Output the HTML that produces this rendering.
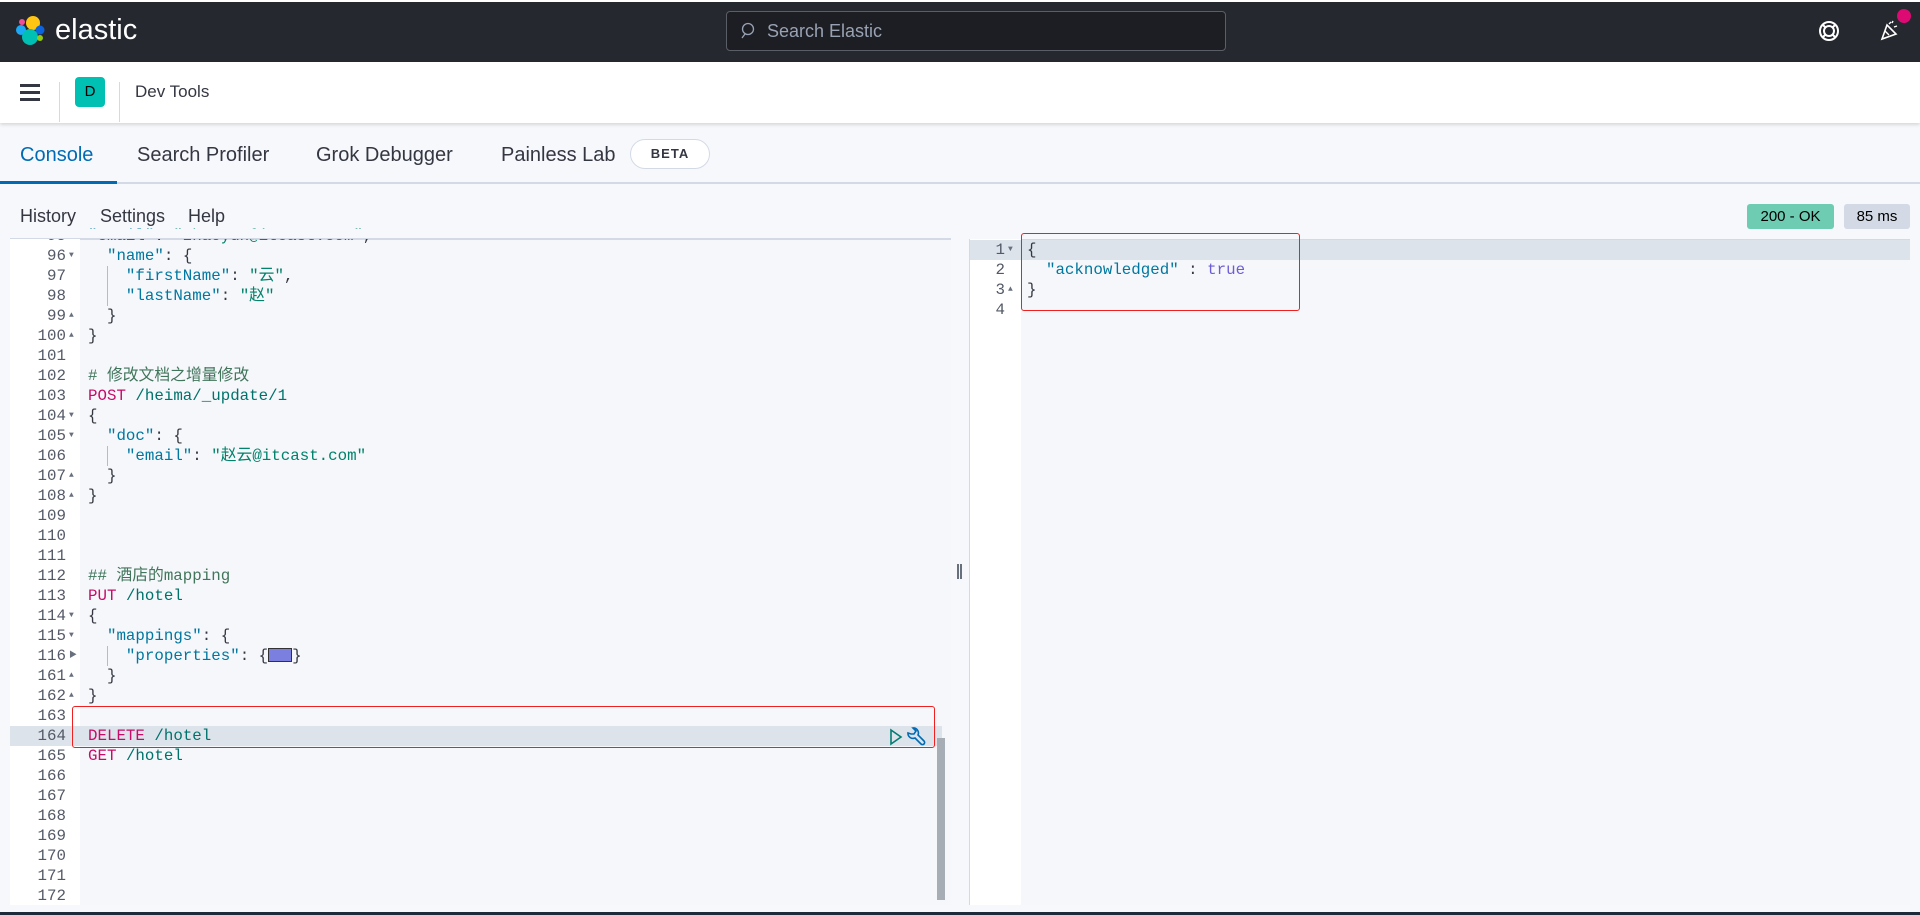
<!DOCTYPE html>
<html><head><meta charset="utf-8"><style>
*{margin:0;padding:0;box-sizing:border-box}
body{width:1920px;height:915px;overflow:hidden;background:#f7f8fc;font-family:"Liberation Sans","Noto Sans CJK SC",sans-serif;position:relative}
.abs{position:absolute}
.hdr{left:0;top:0;width:1920px;height:62px;background:#25282f;border-top:2px solid #fff}
.search{left:726px;top:11px;width:500px;height:40px;border:1px solid #5a5e66;border-radius:4px;background:#1d1e24;color:#98a2b3;font-size:18px;line-height:38px;padding-left:40px}
.bar2{left:0;top:62px;width:1920px;height:61px;background:#fff;box-shadow:0 2px 3px rgba(0,0,0,.12)}
.tab{top:144px;font-size:20px;color:#343741}
.mono{font-family:"Liberation Mono","Noto Sans CJK SC",monospace;font-size:15.8px}
.ln{position:absolute;height:20px;line-height:20px;white-space:pre}
.num{text-align:right;color:#535966}
.k{color:#0077a0}.s{color:#00826b}.m{color:#c80a68}.p{color:#00726b}.c{color:#41755c}.b{color:#343741}.t{color:#6b5dd6}
.fold{position:absolute;font-size:8px;color:#69707d;line-height:20px}
</style></head><body>
<div class="abs hdr"></div>
<svg class="abs" style="left:15px;top:15px" width="30" height="32" viewBox="0 0 30 32">
<circle cx="18" cy="8" r="7" fill="#fec514"/><circle cx="7" cy="7" r="3" fill="#f04e98"/><circle cx="6" cy="15" r="5" fill="#1ba9f5"/><circle cx="25" cy="15" r="4.5" fill="#0b64dd"/><circle cx="15" cy="22" r="8" fill="#00bfb3"/><circle cx="25" cy="23" r="3" fill="#93c90e"/></svg>
<div class="abs" style="left:55px;top:14px;font-size:29px;color:#fff">elastic</div>
<div class="abs search">Search Elastic</div>
<svg class="abs" style="left:739px;top:22px" width="18" height="18" viewBox="0 0 18 18"><circle cx="9" cy="7" r="5.5" fill="none" stroke="#98a2b3" stroke-width="1.3"/><path d="M6 12 L3 16" stroke="#98a2b3" stroke-width="1.3"/></svg>
<svg class="abs" style="left:1818px;top:20px" width="22" height="22" viewBox="0 0 22 22"><circle cx="11" cy="11" r="9" fill="none" stroke="#fff" stroke-width="2"/><circle cx="11" cy="11" r="5" fill="none" stroke="#fff" stroke-width="2"/><path d="M5 5l3 3M17 5l-3 3M5 17l3-3M17 17l-3-3" stroke="#fff" stroke-width="2"/></svg>
<svg class="abs" style="left:1878px;top:18px" width="24" height="24" viewBox="0 0 24 24"><path d="M4 21 L9 7 L18 16 Z" fill="none" stroke="#fff" stroke-width="1.6"/><path d="M7 13l4 4M11 6l2-2M16 9l3-1M14 5l1-2" stroke="#fff" stroke-width="1.4"/></svg>
<div class="abs" style="left:1897px;top:9px;width:14px;height:14px;border-radius:50%;background:#dd0a73"></div>
<div class="abs bar2"></div>
<div class="abs" style="left:20px;top:84px;width:20px;height:2.5px;background:#343741;box-shadow:0 7px 0 #343741,0 14px 0 #343741"></div>
<div class="abs" style="left:59px;top:82px;width:1px;height:40px;background:#d3dae6"></div>
<div class="abs" style="left:119px;top:82px;width:1px;height:40px;background:#d3dae6"></div>
<div class="abs" style="left:75px;top:77px;width:30px;height:30px;border-radius:4px;background:#00bfb3;color:#000;font-size:15px;text-align:center;line-height:30px">D</div>
<div class="abs" style="left:135px;top:82px;font-size:17px;color:#343741">Dev Tools</div>
<div class="abs tab" style="left:20px;color:#006bb4">Console</div>
<div class="abs tab" style="left:137px">Search Profiler</div>
<div class="abs tab" style="left:316px">Grok Debugger</div>
<div class="abs tab" style="left:501px">Painless Lab</div>
<div class="abs" style="left:630px;top:139px;width:80px;height:30px;border:1px solid #d3dae6;border-radius:15px;background:#fff;font-size:13px;font-weight:bold;letter-spacing:1px;text-align:center;line-height:28px;color:#343741">BETA</div>
<div class="abs" style="left:0;top:182px;width:1920px;height:2px;background:#d3dae6"></div>
<div class="abs" style="left:0;top:181px;width:117px;height:3px;background:#006bb4"></div>
<div class="abs" style="left:20px;top:206px;font-size:18px;color:#343741">History</div>
<div class="abs" style="left:100px;top:206px;font-size:18px;color:#343741">Settings</div>
<div class="abs" style="left:188px;top:206px;font-size:18px;color:#343741">Help</div>
<div class="abs" style="left:1747px;top:204px;width:87px;height:25px;background:#6dccb1;border-radius:3px;font-size:15px;text-align:center;line-height:25px;color:#000">200 - OK</div>
<div class="abs" style="left:1844px;top:204px;width:66px;height:25px;background:#d3dae6;border-radius:3px;font-size:15px;text-align:center;line-height:25px;color:#000">85 ms</div>
<!-- left editor -->
<div class="abs" style="left:10px;top:239px;width:941px;height:666px;background:#f5f7fa;border-top:1px solid #d3dae6"></div>
<div class="abs" style="left:10px;top:239px;width:70px;height:666px;background:#fff"></div>
<div class="abs" style="left:10px;top:726px;width:932px;height:20px;background:#dde3eb"></div>
<div class="abs" style="left:937px;top:738px;width:8px;height:162px;background:#a7adb5"></div>
<div class="abs mono" id="L" style="left:0;top:0"></div>
<div class="abs" style="left:969px;top:239px;width:1px;height:666px;background:#d3dae6"></div>
<div class="abs" style="left:957px;top:564px;width:2px;height:15px;background:#69707d;box-shadow:3px 0 0 #69707d"></div>
<!-- right editor -->
<div class="abs" style="left:970px;top:239px;width:940px;height:666px;background:#f5f7fa;border-top:1px solid #d3dae6"></div>
<div class="abs" style="left:970px;top:239px;width:51px;height:666px;background:#fff"></div>
<div class="abs" style="left:970px;top:240px;width:940px;height:20px;background:#dde3eb"></div>
<div class="abs mono">
<div class="ln num" style="left:970px;top:240px;width:35px">1</div><div class="fold" style="left:1008px;top:240px">▼</div>
<div class="ln num" style="left:970px;top:260px;width:35px">2</div>
<div class="ln num" style="left:970px;top:280px;width:35px">3</div><div class="fold" style="left:1008px;top:280px">▲</div>
<div class="ln num" style="left:970px;top:300px;width:35px">4</div>
<div class="ln b" style="left:1027px;top:240px">{</div>
<div class="ln" style="left:1027px;top:260px">  <span class="k">"acknowledged"</span><span class="b"> : </span><span class="t">true</span></div>
<div class="ln b" style="left:1027px;top:280px">}</div>
</div>
<div class="abs" style="left:1021px;top:233px;width:279px;height:78px;border:1.5px solid #f02020;border-radius:3px"></div>
<div class="abs" style="left:72px;top:706px;width:863px;height:42px;border:1.5px solid #f02020;border-radius:3px"></div>
<svg class="abs" style="left:888px;top:727px" width="40" height="20" viewBox="0 0 40 20"><path d="M3 3 L13 10 L3 17 Z" fill="none" stroke="#017d73" stroke-width="1.6"/><path d="M20 6a5 5 0 0 0 7 5l6 6a2 2 0 0 0 3-3l-6-6a5 5 0 0 0-5-7l3 3-2 3-3 0z" fill="none" stroke="#006bb4" stroke-width="1.6"/></svg>
<div class="abs" style="left:0;top:912px;width:1920px;height:3px;background:#1d2a3a"></div>
<script>
var rows=[
["95","",'<span class="k">"email"</span><span class="b">: </span><span class="s">"zhaoyun@itcast.com"</span><span class="b">,</span>'],
["96","▼",'  <span class="k">"name"</span><span class="b">: {</span>'],
["97","",'    <span class="k">"firstName"</span><span class="b">: </span><span class="s">"云"</span><span class="b">,</span>'],
["98","",'    <span class="k">"lastName"</span><span class="b">: </span><span class="s">"赵"</span>'],
["99","▲",'<span class="b">  }</span>'],
["100","▲",'<span class="b">}</span>'],
["101","",''],
["102","",'<span class="c"># 修改文档之增量修改</span>'],
["103","",'<span class="m">POST</span> <span class="p">/heima/_update/1</span>'],
["104","▼",'<span class="b">{</span>'],
["105","▼",'  <span class="k">"doc"</span><span class="b">: {</span>'],
["106","",'    <span class="k">"email"</span><span class="b">: </span><span class="s">"赵云@itcast.com"</span>'],
["107","▲",'<span class="b">  }</span>'],
["108","▲",'<span class="b">}</span>'],
["109","",''],["110","",''],["111","",''],
["112","",'<span class="c">## 酒店的mapping</span>'],
["113","",'<span class="m">PUT</span> <span class="p">/hotel</span>'],
["114","▼",'<span class="b">{</span>'],
["115","▼",'  <span class="k">"mappings"</span><span class="b">: {</span>'],
["116","▶",'    <span class="k">"properties"</span><span class="b">: {<span style="display:inline-block;width:24px;height:14px;background:#7b7fe0;border:1px solid #333;vertical-align:-2px"></span>}</span>'],
["161","▲",'<span class="b">  }</span>'],
["162","▲",'<span class="b">}</span>'],
["163","",''],
["164","",'<span class="m">DELETE</span> <span class="p">/hotel</span>'],
["165","",'<span class="m">GET</span> <span class="p">/hotel</span>'],
["166","",''],["167","",''],["168","",''],["169","",''],["170","",''],["171","",''],["172","",'']];
var h='';rows.forEach(function(r,i){var y=226+i*20;
h+='<div class="ln num" style="left:10px;top:'+y+'px;width:56px">'+r[0]+'</div>';
if(r[1])h+='<div class="fold" style="left:69px;top:'+y+'px">'+r[1]+'</div>';
h+='<div class="ln" style="left:88px;top:'+y+'px">'+r[2]+'</div>';
if([2,3,11,21].indexOf(i)>=0)h+='<div style="position:absolute;left:107px;top:'+y+'px;width:1px;height:20px;background:#bbb"></div>';});
var L=document.getElementById('L');L.innerHTML=h;
</script>
<div class="abs" style="left:10px;top:229px;width:941px;height:10px;background:#f7f8fc;border-bottom:1px solid #d3dae6"></div>
</body></html>
